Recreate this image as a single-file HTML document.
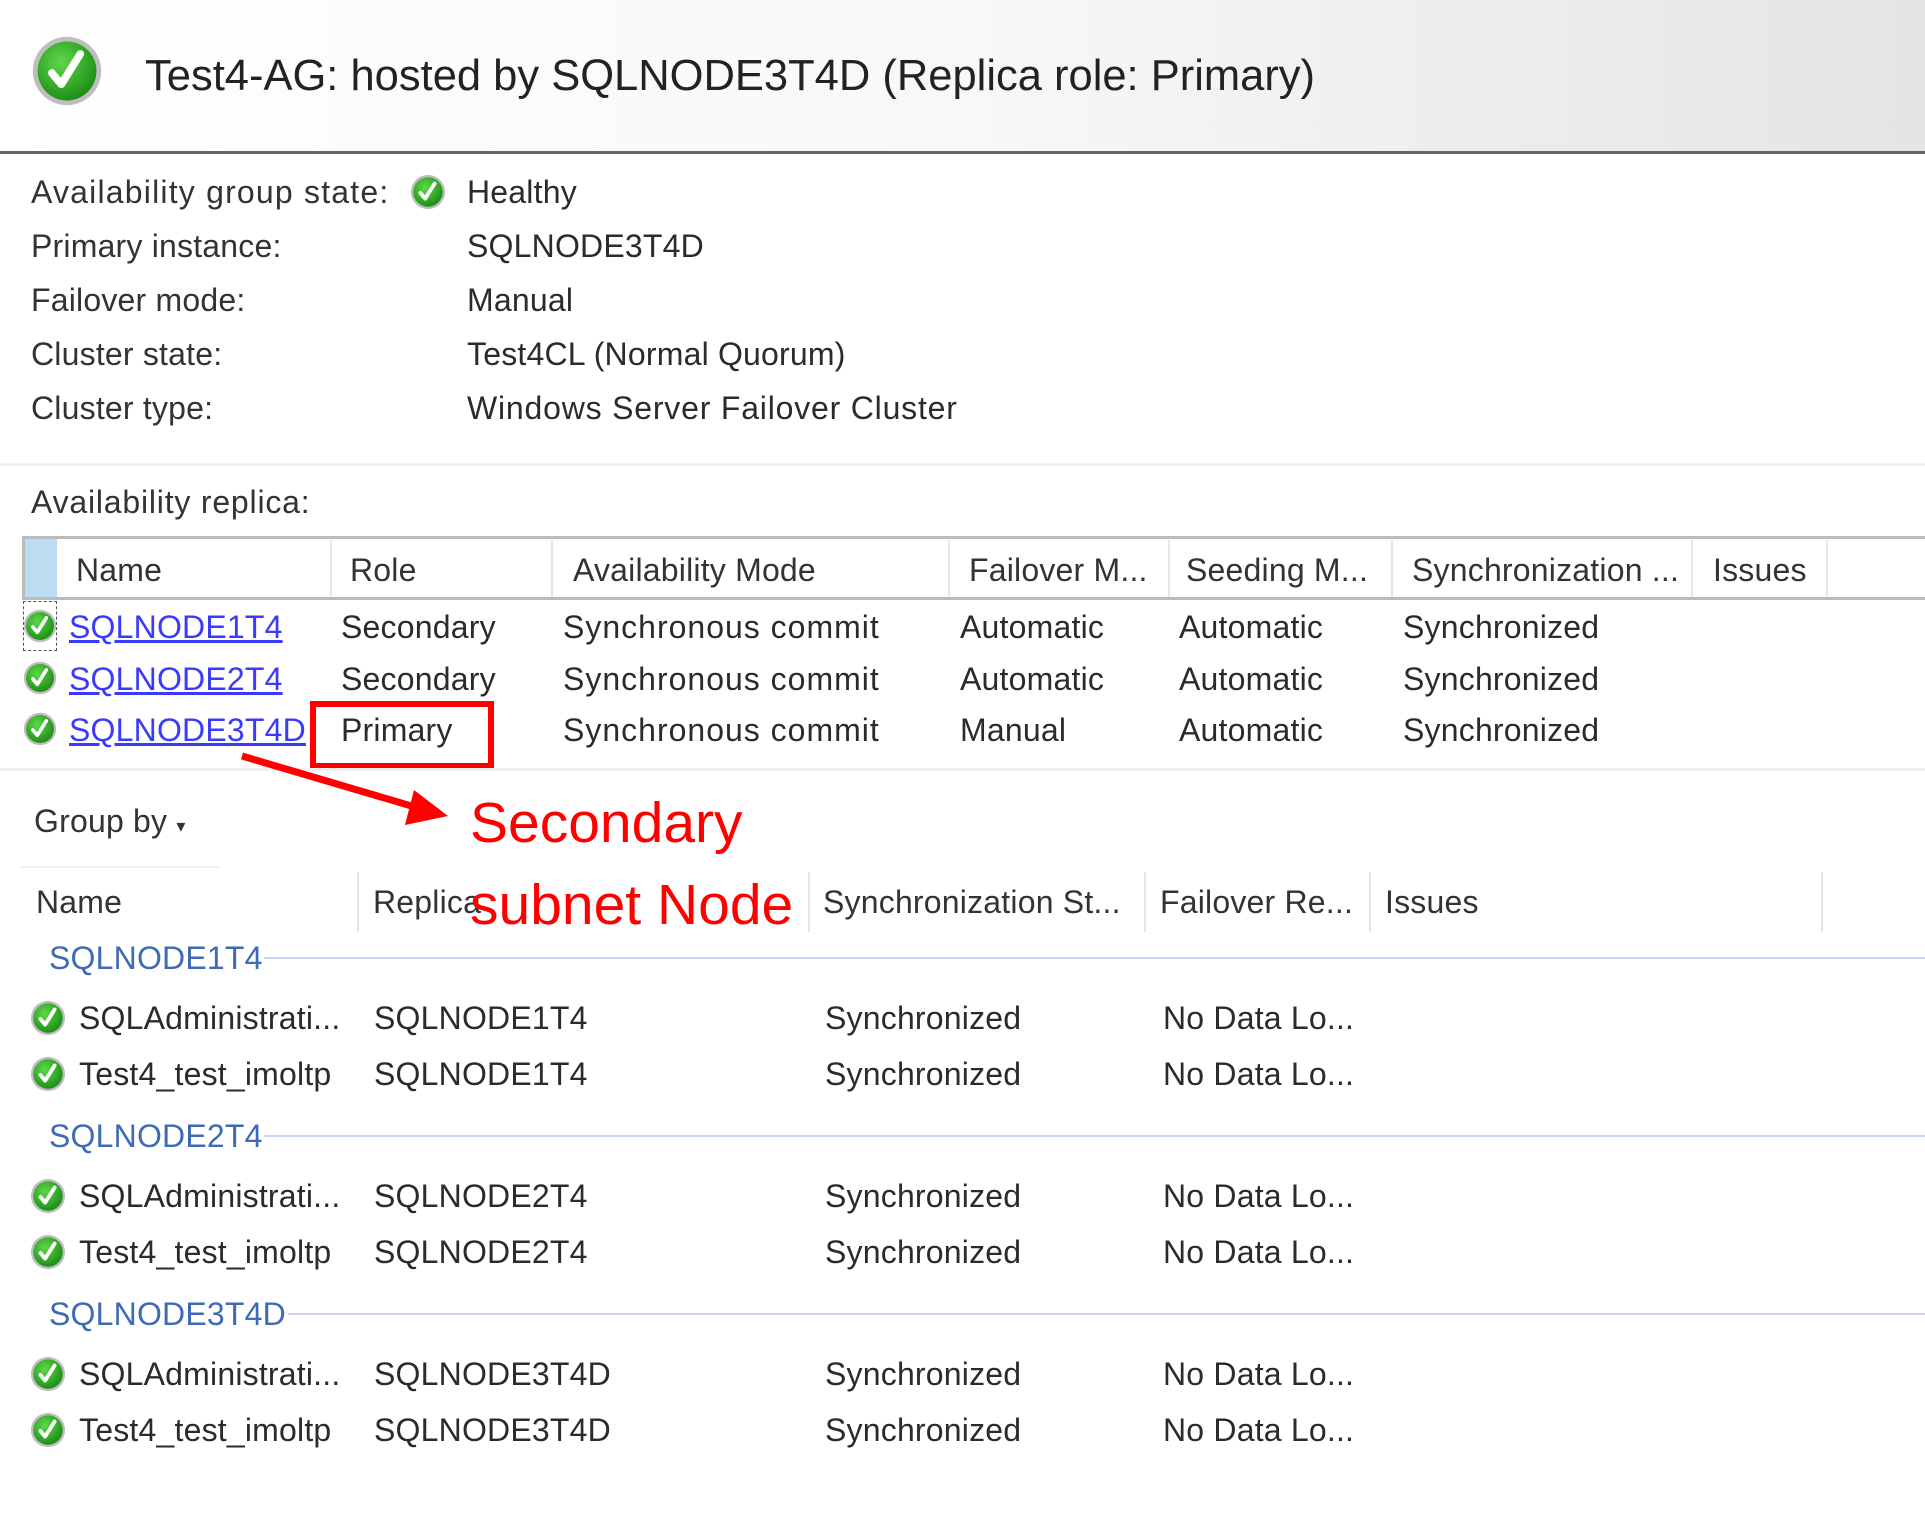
<!DOCTYPE html>
<html><head><meta charset="utf-8"><style>
body{margin:0;width:1925px;height:1513px;background:#fff;position:relative;overflow:hidden;font-family:"Liberation Sans",sans-serif;color:#2b2b2b}
.t{position:absolute;white-space:nowrap;font-size:32px;line-height:36px;letter-spacing:0.2px}
.h{color:#333}
.lk{color:#3a3aff;text-decoration:underline}
.g{color:#3f6bb5}
.vl{position:absolute;width:2px;background:#e6e6e6}
.ic{position:absolute}
</style></head><body>
<svg width="0" height="0" style="position:absolute"><defs>
<radialGradient id="gg" cx="40%" cy="35%" r="70%"><stop offset="0" stop-color="#5fd84a"/><stop offset="1" stop-color="#1a8a14"/></radialGradient>
<symbol id="ck" viewBox="0 0 40 40"><circle cx="20" cy="20" r="18" fill="#888" opacity=".55"/><circle cx="20" cy="20" r="15.5" fill="url(#gg)"/><path d="M12 21 L17 27 L27 11" fill="none" stroke="#fff" stroke-width="4" stroke-linecap="round" stroke-linejoin="round"/></symbol>
</defs></svg>
<div style="position:absolute;left:0;top:0;width:1925px;height:152px;background:linear-gradient(90deg,#fff 0%,#f8f8f8 50%,#e4e4e4 100%)"></div>
<div style="position:absolute;left:0;top:151px;width:1925px;height:3px;background:#666"></div>
<svg class="ic" style="left:29px;top:33px" width="76" height="76"><use href="#ck"/></svg>
<div class="t" style="left:145px;top:51px;font-size:43.5px;line-height:50px;color:#222;letter-spacing:0">Test4-AG: hosted by SQLNODE3T4D (Replica role: Primary)</div>

<div class="t h" style="left:31px;top:174px;letter-spacing:1.2px">Availability group state:</div>
<svg class="ic" style="left:409px;top:173px" width="38" height="38"><use href="#ck"/></svg>
<div class="t" style="left:467px;top:174px">Healthy</div>
<div class="t h" style="left:31px;top:228px">Primary instance:</div><div class="t" style="left:467px;top:228px">SQLNODE3T4D</div>
<div class="t h" style="left:31px;top:282px">Failover mode:</div><div class="t" style="left:467px;top:282px">Manual</div>
<div class="t h" style="left:31px;top:336px">Cluster state:</div><div class="t" style="left:467px;top:336px">Test4CL (Normal Quorum)</div>
<div class="t h" style="left:31px;top:390px">Cluster type:</div><div class="t" style="left:467px;top:390px;letter-spacing:0.8px">Windows Server Failover Cluster</div>
<div style="position:absolute;left:0;top:463px;width:1925px;height:3px;background:#f0f0f0"></div>
<div class="t h" style="left:31px;top:484px;letter-spacing:0.8px">Availability replica:</div>

<div style="position:absolute;left:22px;top:536px;width:1903px;height:3px;background:#bbb"></div>
<div style="position:absolute;left:22px;top:597px;width:1903px;height:3px;background:#bbb"></div>
<div style="position:absolute;left:22px;top:539px;width:3px;height:58px;background:#bbb"></div>
<div style="position:absolute;left:25px;top:539px;width:32px;height:58px;background:#bddcf2"></div>
<div class="vl" style="left:330px;top:540px;height:57px"></div>
<div class="vl" style="left:551px;top:540px;height:57px"></div>
<div class="vl" style="left:948px;top:540px;height:57px"></div>
<div class="vl" style="left:1168px;top:540px;height:57px"></div>
<div class="vl" style="left:1391px;top:540px;height:57px"></div>
<div class="vl" style="left:1691px;top:540px;height:57px"></div>
<div class="vl" style="left:1826px;top:540px;height:57px"></div>
<div class="t h" style="left:76px;top:552px">Name</div>
<div class="t h" style="left:350px;top:552px">Role</div>
<div class="t h" style="left:573px;top:552px">Availability Mode</div>
<div class="t h" style="left:969px;top:552px">Failover M...</div>
<div class="t h" style="left:1186px;top:552px">Seeding M...</div>
<div class="t h" style="left:1412px;top:552px">Synchronization ...</div>
<div class="t h" style="left:1713px;top:552px">Issues</div>

<div style="position:absolute;left:23px;top:601px;width:32px;height:48px;border:1px dashed #555"></div>
<svg class="ic" style="left:22px;top:608px" width="36" height="36"><use href="#ck"/></svg>
<svg class="ic" style="left:22px;top:660px" width="36" height="36"><use href="#ck"/></svg>
<svg class="ic" style="left:22px;top:711px" width="36" height="36"><use href="#ck"/></svg>
<div class="t lk" style="left:69px;top:609px">SQLNODE1T4</div>
<div class="t lk" style="left:69px;top:661px">SQLNODE2T4</div>
<div class="t lk" style="left:69px;top:712px">SQLNODE3T4D</div>
<div class="t" style="left:341px;top:609px">Secondary</div>
<div class="t" style="left:341px;top:661px">Secondary</div>
<div class="t" style="left:341px;top:712px">Primary</div>
<div class="t" style="left:563px;top:609px;letter-spacing:1px">Synchronous commit</div>
<div class="t" style="left:563px;top:661px;letter-spacing:1px">Synchronous commit</div>
<div class="t" style="left:563px;top:712px;letter-spacing:1px">Synchronous commit</div>
<div class="t" style="left:960px;top:609px">Automatic</div>
<div class="t" style="left:960px;top:661px">Automatic</div>
<div class="t" style="left:960px;top:712px">Manual</div>
<div class="t" style="left:1179px;top:609px">Automatic</div>
<div class="t" style="left:1179px;top:661px">Automatic</div>
<div class="t" style="left:1179px;top:712px">Automatic</div>
<div class="t" style="left:1403px;top:609px">Synchronized</div>
<div class="t" style="left:1403px;top:661px">Synchronized</div>
<div class="t" style="left:1403px;top:712px">Synchronized</div>
<div style="position:absolute;left:310px;top:701px;width:172px;height:56px;border:6px solid #f00"></div>
<div style="position:absolute;left:0;top:768px;width:1925px;height:3px;background:#f0f0f0"></div>

<svg class="ic" style="left:0;top:0" width="1925" height="1513"><line x1="242" y1="756" x2="425" y2="810" stroke="#f00" stroke-width="7"/><polygon points="448,816 414,790 405,825" fill="#f00"/></svg>
<div class="t h" style="left:34px;top:803px">Group by <span style="font-size:18px">▾</span></div>
<div style="position:absolute;left:20px;top:866px;width:200px;height:2px;background:#f2f2f2"></div>
<div class="t" style="left:470px;top:790px;font-size:57px;line-height:66px;color:#f00;letter-spacing:0">Secondary</div>

<div class="vl" style="left:357px;top:872px;height:60px"></div>
<div class="vl" style="left:808px;top:872px;height:60px"></div>
<div class="vl" style="left:1144px;top:872px;height:60px"></div>
<div class="vl" style="left:1369px;top:872px;height:60px"></div>
<div class="vl" style="left:1821px;top:872px;height:60px"></div>
<div class="t h" style="left:36px;top:884px">Name</div>
<div class="t h" style="left:373px;top:884px">Replica</div>
<div class="t h" style="left:823px;top:884px">Synchronization St...</div>
<div class="t h" style="left:1160px;top:884px">Failover Re...</div>
<div class="t h" style="left:1385px;top:884px">Issues</div>
<div class="t" style="left:470px;top:872px;font-size:57px;line-height:66px;color:#f00;letter-spacing:0">subnet Node</div>

<div class="t g" style="left:49px;top:940px">SQLNODE1T4</div>
<div style="position:absolute;left:264px;top:957px;width:1661px;height:2px;background:#c8d4ea"></div>
<div class="t g" style="left:49px;top:1118px">SQLNODE2T4</div>
<div style="position:absolute;left:264px;top:1135px;width:1661px;height:2px;background:#c8d4ea"></div>
<div class="t g" style="left:49px;top:1296px">SQLNODE3T4D</div>
<div style="position:absolute;left:288px;top:1313px;width:1637px;height:2px;background:#c8d4ea"></div>

<svg class="ic" style="left:29px;top:999px" width="38" height="38"><use href="#ck"/></svg>
<svg class="ic" style="left:29px;top:1055px" width="38" height="38"><use href="#ck"/></svg>
<svg class="ic" style="left:29px;top:1177px" width="38" height="38"><use href="#ck"/></svg>
<svg class="ic" style="left:29px;top:1233px" width="38" height="38"><use href="#ck"/></svg>
<svg class="ic" style="left:29px;top:1355px" width="38" height="38"><use href="#ck"/></svg>
<svg class="ic" style="left:29px;top:1411px" width="38" height="38"><use href="#ck"/></svg>

<div class="t" style="left:79px;top:1000px">SQLAdministrati...</div><div class="t" style="left:374px;top:1000px">SQLNODE1T4</div><div class="t" style="left:825px;top:1000px">Synchronized</div><div class="t" style="left:1163px;top:1000px">No Data Lo...</div>
<div class="t" style="left:79px;top:1056px">Test4_test_imoltp</div><div class="t" style="left:374px;top:1056px">SQLNODE1T4</div><div class="t" style="left:825px;top:1056px">Synchronized</div><div class="t" style="left:1163px;top:1056px">No Data Lo...</div>
<div class="t" style="left:79px;top:1178px">SQLAdministrati...</div><div class="t" style="left:374px;top:1178px">SQLNODE2T4</div><div class="t" style="left:825px;top:1178px">Synchronized</div><div class="t" style="left:1163px;top:1178px">No Data Lo...</div>
<div class="t" style="left:79px;top:1234px">Test4_test_imoltp</div><div class="t" style="left:374px;top:1234px">SQLNODE2T4</div><div class="t" style="left:825px;top:1234px">Synchronized</div><div class="t" style="left:1163px;top:1234px">No Data Lo...</div>
<div class="t" style="left:79px;top:1356px">SQLAdministrati...</div><div class="t" style="left:374px;top:1356px">SQLNODE3T4D</div><div class="t" style="left:825px;top:1356px">Synchronized</div><div class="t" style="left:1163px;top:1356px">No Data Lo...</div>
<div class="t" style="left:79px;top:1412px">Test4_test_imoltp</div><div class="t" style="left:374px;top:1412px">SQLNODE3T4D</div><div class="t" style="left:825px;top:1412px">Synchronized</div><div class="t" style="left:1163px;top:1412px">No Data Lo...</div>
</body></html>
